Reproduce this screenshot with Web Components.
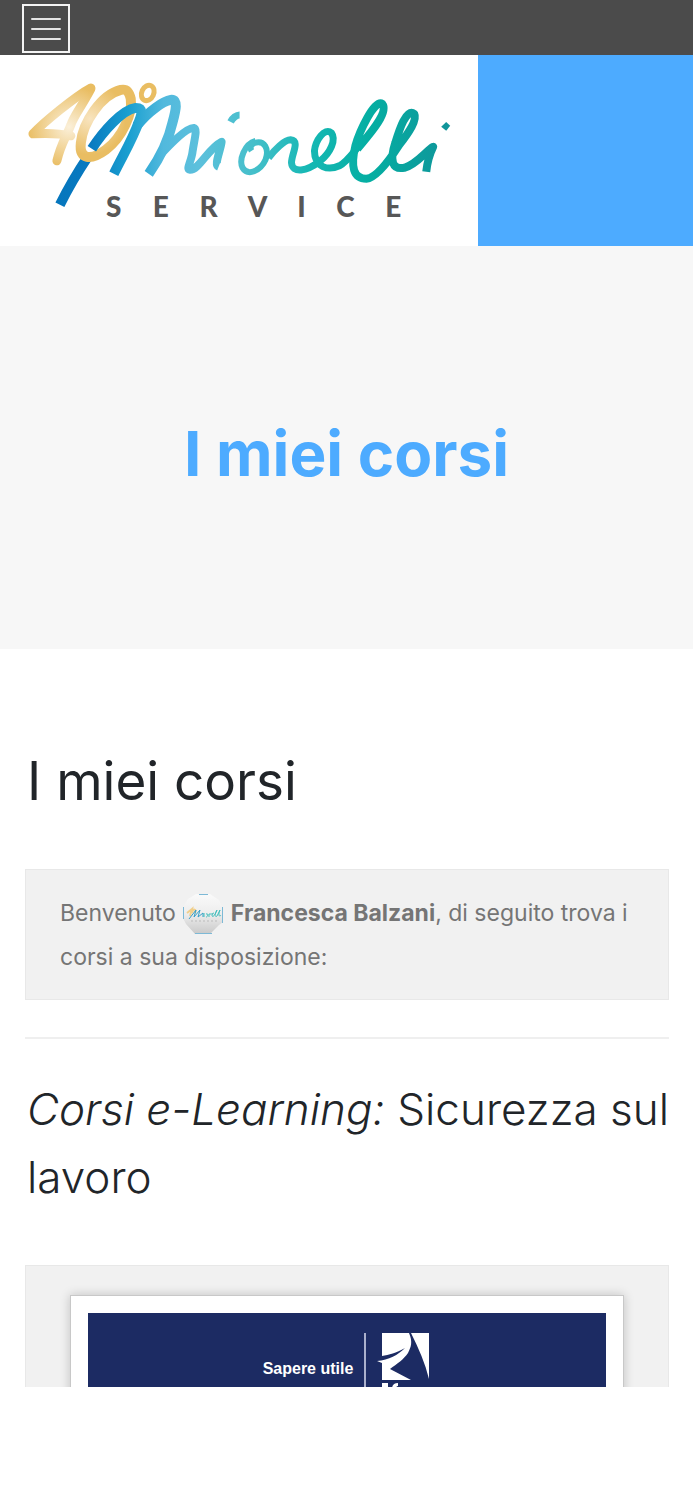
<!DOCTYPE html>
<html lang="it">
<head>
<meta charset="utf-8">
<meta name="viewport" content="width=device-width, initial-scale=1">
<title>I miei corsi</title>
<style>
  body {
    margin: 0;
    background: #fff;
    color: #212529;
    font-family: Inter, "Liberation Sans", sans-serif;
  }
</style>
</head>
<body>
<course-page>
  <top-bar slot="header"></top-bar>
  <brand-header slot="header"><miorelli-logo></miorelli-logo></brand-header>
  <page-hero slot="header">I miei corsi</page-hero>

  <page-title>I miei corsi</page-title>
  <welcome-box>Benvenuto <user-avatar></user-avatar> <strong>Francesca Balzani</strong>, di seguito trova i corsi a sua disposizione:</welcome-box>
  <course-section>
    <span slot="title"><em>Corsi e-Learning:</em> Sicurezza sul lavoro</span>
    <course-card><course-banner>Sapere utile</course-banner></course-card>
  </course-section>
</course-page>

<script>
// Attaches an open shadow root filled with the given markup
class BaseElement extends HTMLElement {
  constructor() {
    super();
    this.attachShadow({ mode: 'open' });
  }

  connectedCallback() {
    this.shadowRoot.innerHTML = `<style>${this.getStyles()}</style>${this.getMarkup()}`;
  }

  getStyles() {
    return ':host { display: block; }';
  }

  getMarkup() {
    return '<slot></slot>';
  }
}

class CoursePage extends BaseElement {
  getStyles() {
    return `
      :host { display: block; }
      main { padding: 96px 24px 0 25px; }
    `;
  }

  getMarkup() {
    return '<header><slot name="header"></slot></header><main><slot></slot></main>';
  }
}

class TopBar extends BaseElement {
  getStyles() {
    return `
      :host {
        display: flex;
        align-items: center;
        height: 55px;
        padding: 2px 22px 0;
        box-sizing: border-box;
        background: #4b4b4b;
      }
      button {
        width: 48px;
        height: 49px;
        padding: 0;
        border: 2px solid #f4f4f4;
        background: none;
        color: #e4e4e4;
        cursor: pointer;
      }
      svg { display: block; margin: 0 auto; }
    `;
  }

  getMarkup() {
    return `
      <button type="button" aria-label="Menu">
        <svg width="30" height="24" viewBox="0 0 30 24" stroke="currentColor" stroke-width="2" stroke-linecap="round">
          <path d="M1 2h28M1 12h28M1 22h28"/>
        </svg>
      </button>
    `;
  }
}

class BrandHeader extends BaseElement {
  getStyles() {
    return `
      :host { display: block; background: #4dabff; }
      a { display: block; width: 69%; background: #fff; }
    `;
  }

  getMarkup() {
    return '<a href="#" aria-label="Miorelli Service"><slot></slot></a>';
  }
}

class MiorelliLogo extends BaseElement {
  getStyles() {
    return `
      :host { display: block; }
      svg { display: block; width: 100%; height: auto; }
      text { font: 900 28px Lato, sans-serif; fill: #575757; text-anchor: middle; }
    `;
  }

  getMarkup() {
    return `
      <svg viewBox="0 55 479 191" fill="none" stroke-linejoin="round">
        <defs>
          <radialGradient id="four" gradientUnits="userSpaceOnUse" cx="69" cy="127" r="42">
            <stop offset="0" stop-color="#fbf0da"/><stop offset="1" stop-color="#e9bd62"/>
          </radialGradient>
          <radialGradient id="zero" gradientUnits="userSpaceOnUse" cx="90" cy="119" r="36">
            <stop offset="0" stop-color="#f8e4bf"/><stop offset="1" stop-color="#e9bd62"/>
          </radialGradient>
          <linearGradient id="sea" gradientUnits="userSpaceOnUse" x1="58" y1="0" x2="450" y2="0">
            <stop offset="0" stop-color="#0576bd"/>
            <stop offset=".08" stop-color="#0879c0"/>
            <stop offset=".18" stop-color="#199fd0"/>
            <stop offset=".27" stop-color="#52b9dd"/>
            <stop offset=".36" stop-color="#5cc0dc"/>
            <stop offset=".5" stop-color="#45bfca"/>
            <stop offset=".64" stop-color="#16b8b4"/>
            <stop offset=".8" stop-color="#04aea2"/>
            <stop offset="1" stop-color="#10959a"/>
          </linearGradient>
        </defs>
        <g stroke="url(#four)" stroke-width="9" stroke-linecap="round">
          <path d="M91 88C76 96 43 123 33 134C48 133 62 134 71 136"/>
          <path d="M91 89C81 108 74 116 71 125C66 138 61 144 57 161"/>
        </g>
        <path stroke="url(#sea)" stroke-width="10" d="M60 205C67 191 76 175 88 157"/>
        <path stroke="url(#zero)" stroke-width="10" d="M121 90C101 95 83 123 81 143C79 160 91 161 106 150C123 137 133 113 131 99C129 90 126 89 121 90Z"/>
        <ellipse stroke="url(#zero)" stroke-width="5" cx="148" cy="93" rx="6" ry="8" transform="rotate(25 148 93)"/>
        <g stroke="url(#sea)">
          <path stroke-width="10" d="M92 149C103 132 122 110 136 108C144 108 142 115 139 122C133 139 125 152 114 174"/>
          <path stroke-width="10" d="M137 126C149 111 164 101 171 100C179 99 176 111 173 122C169 140 161 157 149 174"/>
          <path stroke-width="8" d="M158 158C169 146 186 128 194 128C198 129 195 138 193 151C192 161 186 170 190 170C199 171 208 149 222 142C221 151 214 165 219 167"/>
          <path stroke-width="7" d="M231 122C233 118 237 115 240 115"/>
          <path stroke-width="6" d="M256 141C245 144 239 160 243 168C248 177 261 171 266 160C270 149 265 140 255 143C251 145 250 148 252 151"/>
          <path stroke-width="7" d="M269 158C275 150 285 140 291 140C301 141 292 154 292 163C293 174 307 172 321 161C331 153 337 140 332 133C325 127 316 141 315 151C315 168 329 171 340 166C348 162 355 151 363 142"/>
          <path stroke-width="8" d="M358 149C368 137 390 113 383 104C375 99 360 132 356 146C351 167 354 179 367 179C377 178 391 159 400 145C410 132 418 120 415 114C407 108 400 130 396 143C390 161 393 170 405 168C417 165 427 151 434 147C430 155 428 163 427 172"/>
        </g>
        <path fill="#10959a" d="M447 122l4 4l-4 5l-5-4z"/>
        <text y="217" x="114 161 209 258 302 346 394">SERVICE</text>
      </svg>
    `;
  }
}

class PageHero extends BaseElement {
  getStyles() {
    return `
      :host { display: block; padding: 160px 24px 147px; background: #f7f7f7; }
      h1 {
        margin: 0;
        color: #4dabff;
        font-size: 62px;
        font-weight: 700;
        line-height: 96px;
        text-align: center;
      }
    `;
  }

  getMarkup() {
    return '<h1><slot></slot></h1>';
  }
}

class PageTitle extends BaseElement {
  getStyles() {
    return `
      :host { display: block; margin-bottom: 52px; }
      h2 { margin: 0; padding-left: 2px; font-size: 53px; font-weight: 400; line-height: 72px; }
    `;
  }

  getMarkup() {
    return '<h2><slot></slot></h2>';
  }
}

class WelcomeBox extends BaseElement {
  getStyles() {
    return `
      :host {
        display: block;
        padding: 21px 34px 20px;
        border: 1px solid #e8e8e8;
        background: #f1f1f1;
        color: #757575;
      }
      p { margin: 0; font-size: 23px; line-height: 44px; }
    `;
  }

  getMarkup() {
    return '<p><slot></slot></p>';
  }
}

class UserAvatar extends BaseElement {
  getStyles() {
    return `
      :host { display: inline-block; height: 42px; vertical-align: middle; }
      svg { display: block; }
    `;
  }

  getMarkup() {
    return `
      <svg width="42" height="42" viewBox="0 0 42 42" fill="none" role="img" aria-label="Foto profilo">
        <defs>
          <linearGradient id="disc" x1="0" y1="0" x2="0" y2="1">
            <stop offset="0" stop-color="#fafafa"/><stop offset=".5" stop-color="#ededed"/><stop offset="1" stop-color="#c9c9c9"/>
          </linearGradient>
        </defs>
        <path fill="url(#disc)" d="M14 1h14l9 6l4 9v13l-4 3l-9 9H13L4 31L1 25V14L6 6Z"/>
        <path stroke="#7db9d6" d="M17 1.500h9M13 40.500h17M1.500 14v12M40.500 14v16"/>
        <path stroke="#f0cf8c" stroke-width="2" d="M5 20l5-4l-2 7M10 20c1-5 5-4 3 0"/>
        <path stroke="#389fc8" d="M7 26l7-9l-2 7l6-7l-2 7l5-4v4"/>
        <path stroke="#42bfbd" d="M22 20v4M24 21c3-1 2 3 0 3M27 24v-3l3 0c2-2 2-1 0 1c0 4 4-1 5-5c-3 4-2 8 0 6l3-6c-2 4-1 8 1 5"/>
        <path stroke="#bbb" stroke-dasharray="2 2" d="M9 28h27"/>
      </svg>
    `;
  }
}

class CourseSection extends BaseElement {
  getStyles() {
    return `
      :host {
        display: block;
        margin-top: 37px;
        padding-top: 36px;
        border-top: 2px solid #efefef;
      }
      h3 { margin: 0 0 54px; padding-left: 2px; font-size: 44px; font-weight: 300; line-height: 68px; }
    `;
  }

  getMarkup() {
    return '<h3><slot name="title"></slot></h3><slot></slot>';
  }
}

class CourseCard extends BaseElement {
  getStyles() {
    return `
      :host {
        display: block;
        height: 122px;
        padding: 29px 44px 0;
        box-sizing: border-box;
        overflow: hidden;
        border: 1px solid #e8e8e8;
        border-bottom: 0;
        background: #f1f1f1;
      }
      article {
        padding: 17px 17px 40px;
        border: 1px solid #c8c8c8;
        background: #fff;
        box-shadow: 0 0 10px rgba(0, 0, 0, 0.2);
      }
    `;
  }

  getMarkup() {
    return '<article><slot></slot></article>';
  }
}

class CourseBanner extends BaseElement {
  getStyles() {
    return `
      :host {
        display: flex;
        justify-content: center;
        align-items: flex-start;
        gap: 11px;
        padding: 20px 0;
        background: #1c2b63;
        color: #fff;
      }
      .motto {
        padding-top: 24px;
        font: 700 16px/24px "Liberation Sans Narrow", "Liberation Sans", sans-serif;
      }
      .rule { width: 2px; height: 80px; background: #aab0cc; }
      svg { display: block; }
    `;
  }

  getMarkup() {
    return `
      <span class="motto"><slot></slot></span>
      <span class="rule"></span>
      <svg width="54" height="64" viewBox="0 0 54 64" fill="#fff">
        <path d="M5 0H32C36 9 34 14 31 20C27 26 20 31 13 36L34 47H5V30L0 28C12 27 21 22 28 15C19 20 12 22 5 23Z"/>
        <path d="M34 0H52V46C48 30 42 16 34 0Z"/>
        <path d="M5 50h6v14H5zM15 64V56q0-6 6-6v3q-2 0-2 3v8z"/>
      </svg>
    `;
  }
}

customElements.define('course-page', CoursePage);
customElements.define('top-bar', TopBar);
customElements.define('brand-header', BrandHeader);
customElements.define('miorelli-logo', MiorelliLogo);
customElements.define('page-hero', PageHero);
customElements.define('page-title', PageTitle);
customElements.define('welcome-box', WelcomeBox);
customElements.define('user-avatar', UserAvatar);
customElements.define('course-section', CourseSection);
customElements.define('course-card', CourseCard);
customElements.define('course-banner', CourseBanner);
</script>
</body>
</html>
